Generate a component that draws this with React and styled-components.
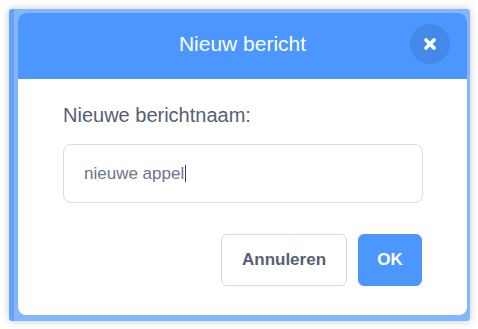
import styled, { createGlobalStyle } from "styled-components";

const GlobalStyle = createGlobalStyle`
  html, body {
    margin: 0;
    padding: 0;
    background: #ffffff;
    font-family: "Liberation Sans", Arial, sans-serif;
  }
  body {
    padding: 9px 8px 8px 9px;
  }
`;

const Frame = styled.div`
  width: 461px;
  height: 312px;
  box-sizing: border-box;
  padding: 4px 3px 6px 4px;
  border-left: 5px solid #62a3ff;
  background: #82b6ff;
  border-radius: 3px;
  box-shadow: 0 0 8px rgba(0, 0, 0, 0.22);
`;

const Modal = styled.div`
  width: 449px;
  height: 302px;
  display: flex;
  flex-direction: column;
  background: #ffffff;
  border-radius: 8px;
  overflow: hidden;
`;

const Header = styled.div`
  height: 66px;
  display: grid;
  grid-template-columns: 1fr auto 1fr;
  align-items: center;
  background: #4c97ff;
  padding: 0 17px 4px 17px;
  box-sizing: border-box;
`;

const Title = styled.h1`
  grid-column: 2;
  margin: 0;
  font-size: 21px;
  font-weight: normal;
  color: #ffffff;
`;

const CloseButton = styled.div`
  grid-column: 3;
  justify-self: end;
  width: 40px;
  height: 40px;
  border-radius: 50%;
  background: #4589e8;
  display: flex;
  align-items: center;
  justify-content: center;
`;

const Body = styled.div`
  flex: 1;
  display: flex;
  flex-direction: column;
  padding: 25px 44px 29px 45px;
`;

const Label = styled.label`
  font-size: 20px;
  line-height: 23px;
  color: #575e75;
`;

const Field = styled.div`
  margin-top: 17px;
  height: 59px;
  box-sizing: border-box;
  border: 1px solid #dcdcdc;
  border-radius: 8px;
  padding: 0 20px;
  display: flex;
  align-items: center;
  font-size: 17px;
  color: #6e7489;
`;

const Caret = styled.span`
  display: inline-block;
  width: 1px;
  height: 17px;
  margin-left: 1px;
  background: #3a3f4f;
`;

const Buttons = styled.div`
  margin-top: 31px;
  display: flex;
  justify-content: flex-end;
  gap: 11px;
  padding-right: 1px;
`;

const Button = styled.button`
  height: 52px;
  width: ${(p) => (p.$primary ? "64px" : "126px")};
  padding: 0;
  border-radius: 6px;
  font-family: "Liberation Sans", Arial, sans-serif;
  font-size: 17px;
  font-weight: bold;
  border: 1px solid ${(p) => (p.$primary ? "#4c97ff" : "#d9d9d9")};
  background: ${(p) => (p.$primary ? "#4c97ff" : "#ffffff")};
  color: ${(p) => (p.$primary ? "#ffffff" : "#575e75")};
`;

const App = () => {
  return (
    <>
      <GlobalStyle />
      <Frame>
        <Modal>
          <Header>
            <Title>Nieuw bericht</Title>
            <CloseButton>
              <svg width="14" height="14" viewBox="0 0 14 14">
                <path
                  d="M3 3 L11 11 M11 3 L3 11"
                  stroke="#ffffff"
                  strokeWidth="3.6"
                  strokeLinecap="round"
                />
              </svg>
            </CloseButton>
          </Header>
          <Body>
            <Label>Nieuwe berichtnaam:</Label>
            <Field>
              nieuwe appel
              <Caret />
            </Field>
            <Buttons>
              <Button>Annuleren</Button>
              <Button $primary>OK</Button>
            </Buttons>
          </Body>
        </Modal>
      </Frame>
    </>
  );
};

export default App;
